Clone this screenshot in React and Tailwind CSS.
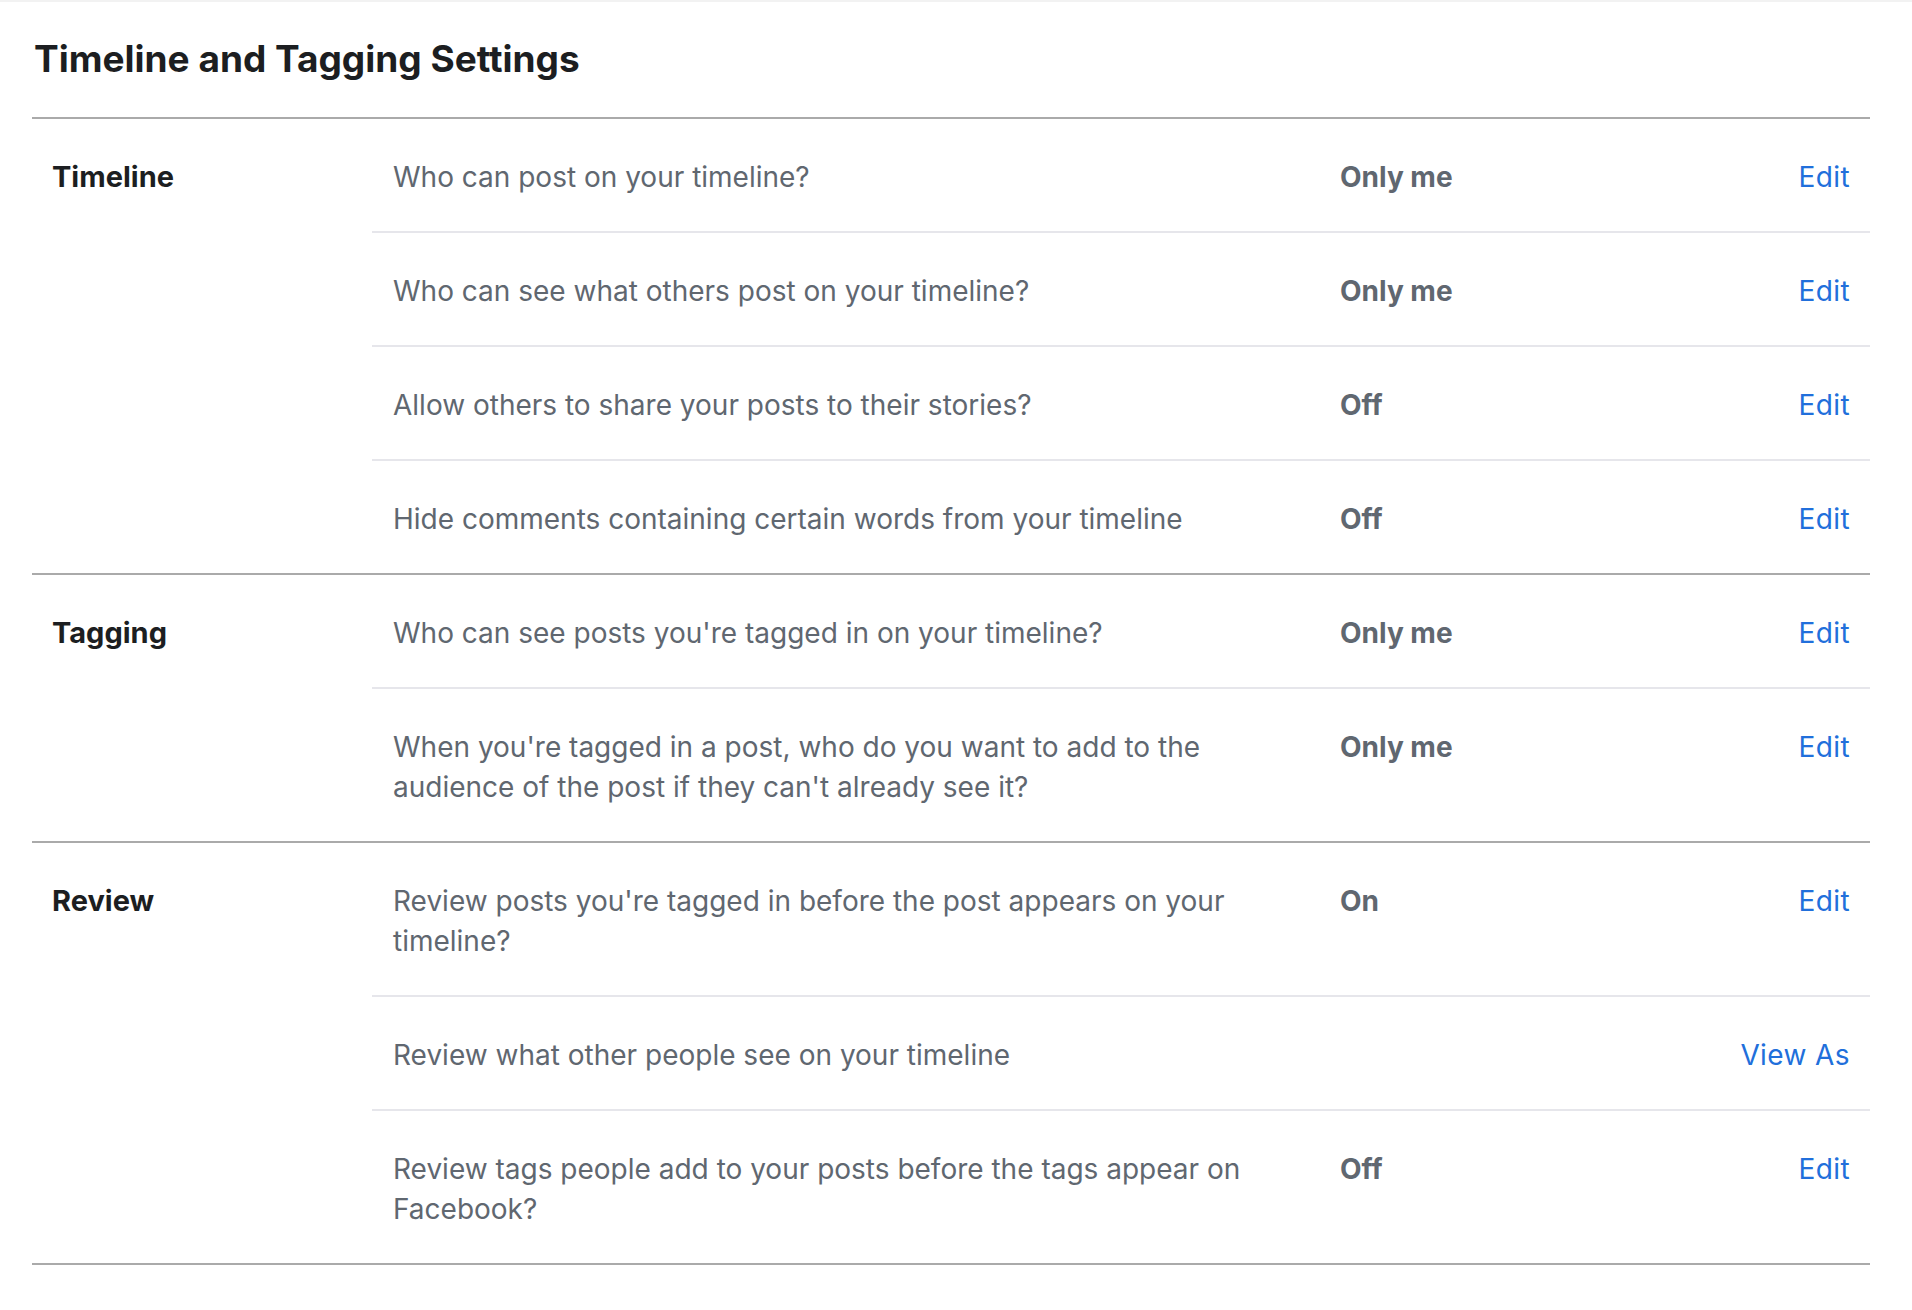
import React from "react";

const sections = [
  {
    title: "Timeline",
    rows: [
      { label: "Who can post on your timeline?", value: "Only me", action: "Edit" },
      { label: "Who can see what others post on your timeline?", value: "Only me", action: "Edit" },
      { label: "Allow others to share your posts to their stories?", value: "Off", action: "Edit" },
      { label: "Hide comments containing certain words from your timeline", value: "Off", action: "Edit" }
    ]
  },
  {
    title: "Tagging",
    rows: [
      { label: "Who can see posts you're tagged in on your timeline?", value: "Only me", action: "Edit" },
      {
        label: "When you're tagged in a post, who do you want to add to the audience of the post if they can't already see it?",
        value: "Only me",
        action: "Edit"
      }
    ]
  },
  {
    title: "Review",
    rows: [
      {
        label: "Review posts you're tagged in before the post appears on your timeline?",
        value: "On",
        action: "Edit"
      },
      { label: "Review what other people see on your timeline", value: "", action: "View As" },
      {
        label: "Review tags people add to your posts before the tags appear on Facebook?",
        value: "Off",
        action: "Edit"
      }
    ]
  }
];

function SettingRow({ row, last }) {
  return (
    <div
      className={
        last
          ? "flex pl-[21px] pr-[20px] pt-[38px] pb-[34px]"
          : "flex pl-[21px] pr-[20px] pt-[38px] pb-[34px] border-b-2 border-[#e6e6eb]"
      }
    >
      <div className="w-[947px] pr-[24px] text-[#606770]">
        {row.label}
      </div>
      <div className="flex-1 font-bold text-[#606770]">
        {row.value}
      </div>
      <a href="#" className="text-[#216fdb] tracking-[0.4px]">
        {row.action}
      </a>
    </div>
  );
}

export default function App() {
  return (
    <div
      className="min-h-screen bg-white pl-[32px] pt-[34px] border-t-2 border-[#f2f2f2]"
      style={{ fontFamily: "Inter, 'Liberation Sans', sans-serif" }}
    >

      {/* ================= HEADER ================= */}
      <h1 className="pl-[2px] text-[37px] leading-[45px] font-bold text-[#1c1e21]">
        Timeline and Tagging Settings
      </h1>

      {/* ================= SECTIONS ================= */}
      <div className="w-[1838px] mt-[36px] border-t-2 border-[#aaaaaa] text-[28px] leading-[40px]">

        {sections.map(section => (
          <div key={section.title} className="flex border-b-2 border-[#aaaaaa]">

            <div className="w-[340px] pl-[20px] pt-[38px] text-[29px] font-bold text-[#1c1e21]">
              {section.title}
            </div>

            <div className="flex-1">
              {section.rows.map((row, i) => (
                <SettingRow
                  key={row.label}
                  row={row}
                  last={i === section.rows.length - 1}
                />
              ))}
            </div>

          </div>
        ))}

      </div>

    </div>
  );
}
